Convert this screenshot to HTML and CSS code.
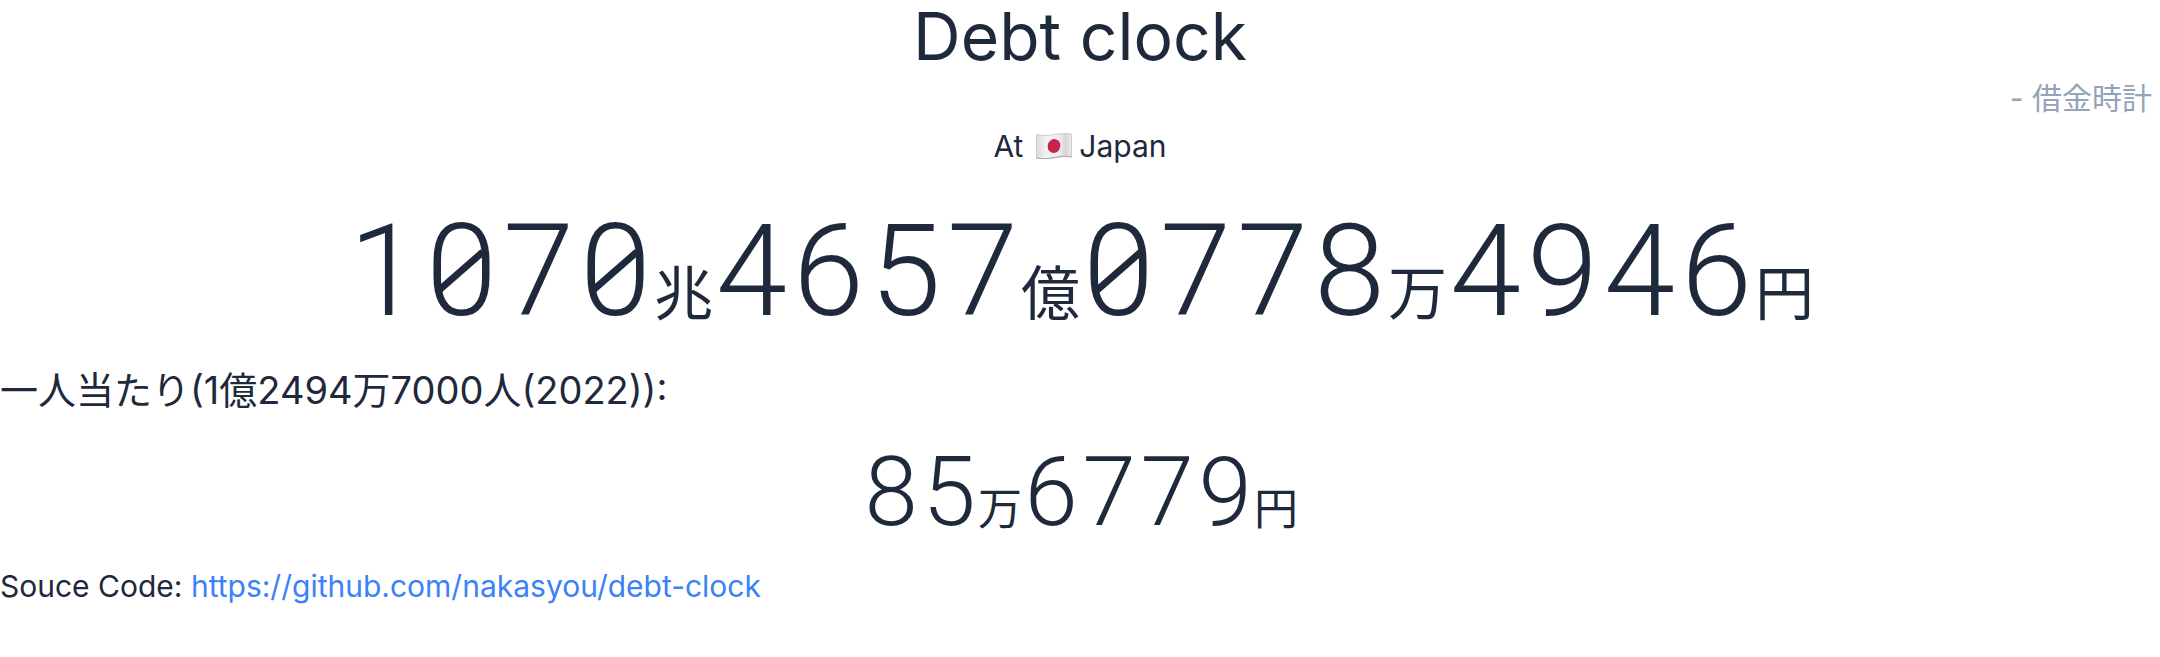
FILE: index.html
```html
<!DOCTYPE html>
<html lang="ja">
<head>
<meta charset="utf-8">
<title>Debt clock</title>
<link rel="stylesheet" href="styles.css">
</head>
<body>
<main class="page">
  <h1 class="title">Debt clock</h1>
  <p class="subtitle">- 借金時計</p>
  <p class="place">
    <span>At</span>
    <svg class="flag" viewBox="0 0 36 26" role="img" aria-label="Japan flag">
      <defs>
        <linearGradient id="cloth" x1="0" x2="1" y1="0" y2="0">
          <stop offset="0" stop-color="#d9d9d9"/>
          <stop offset=".28" stop-color="#f3f3f3"/>
          <stop offset=".65" stop-color="#ededed"/>
          <stop offset=".82" stop-color="#d6d6d6"/>
          <stop offset="1" stop-color="#e9e9e9"/>
        </linearGradient>
      </defs>
      <path d="M.5 1.500C12 5 23-1.500 35.500 1V24C24 21.500 12 28 .5 25Z" fill="url(#cloth)" stroke="#bdbdbd" stroke-width=".7"/>
      <path d="M.5 25C12 28 24 21.500 35.500 24" fill="none" stroke="#999" stroke-width=".8"/>
      <ellipse cx="18" cy="13" rx="6.300" ry="7" transform="rotate(20 18 13)" fill="#c9234a"/>
    </svg>
    <span>Japan</span>
  </p>
  <p class="counter total">
    <span class="digit">1</span><span class="digit zero">0</span><span class="digit">7</span><span class="digit zero">0</span><span class="unit">兆</span><span class="digit">4</span><span class="digit">6</span><span class="digit">5</span><span class="digit">7</span><span class="unit">億</span><span class="digit zero">0</span><span class="digit">7</span><span class="digit">7</span><span class="digit">8</span><span class="unit">万</span><span class="digit">4</span><span class="digit">9</span><span class="digit">4</span><span class="digit">6</span><span class="unit">円</span>
  </p>
  <p class="caption">一人当たり(1億2494万7000人(2022)):</p>
  <p class="counter share">
    <span class="digit">8</span><span class="digit">5</span><span class="unit">万</span><span class="digit">6</span><span class="digit">7</span><span class="digit">7</span><span class="digit">9</span><span class="unit">円</span>
  </p>
  <p class="source">Souce Code: <a class="link" href="https://github.com/nakasyou/debt-clock">https://github.com/nakasyou/debt-clock</a></p>
</main>
</body>
</html>
```
FILE: styles.css
```css
body {
  margin: 0;
  background: #fff;
  color: #1e293b;
  font-family: Inter, "Noto Sans CJK JP", sans-serif;
}

h1, p {
  margin: 0;
  font-weight: 400;
}

.page {
  display: flex;
  flex-direction: column;
}

.title {
  font-size: 66px;
  line-height: 72px;
  text-align: center;
}

.subtitle {
  padding-right: 8px;
  font-size: 30px;
  line-height: 52px;
  text-align: right;
  color: #94a3b8;
}

.place {
  display: flex;
  justify-content: center;
  align-items: center;
  font-size: 30px;
  line-height: 44px;
}

.flag {
  width: 36px;
  height: 26px;
  margin: 0 7px 0 13px;
}

.counter {
  display: flex;
  justify-content: center;
  align-items: baseline;
}

.digit {
  position: relative;
  font-family: Roboto, sans-serif;
  font-weight: 300;
  text-align: center;
}

/* Slash through the zero, kept inside its bowl */
.zero::after {
  content: "";
  position: absolute;
  top: 50%;
  left: 50%;
  width: 58px;
  height: 7px;
  background: currentColor;
  transform: translate(-50%, -50%) rotate(-41deg);
}

.unit {
  font-family: "Noto Sans CJK JP", sans-serif;
  font-weight: 400;
}

.total {
  padding: 39px 0 27px;
  font-size: 128px;
  line-height: 128px;
}

.total .digit {
  width: 77px;
}

.total .unit {
  font-size: 59px;
  line-height: 59px;
}

.caption {
  font-size: 38px;
  line-height: 56px;
}

.share {
  padding: 26px 0 22px;
  font-size: 96px;
  line-height: 96px;
}

.share .digit {
  width: 58px;
}

.share .unit {
  font-size: 44px;
  line-height: 44px;
}

.source {
  font-size: 30px;
  line-height: 48px;
}

.link {
  color: #3b82f6;
  text-decoration: none;
}
```
